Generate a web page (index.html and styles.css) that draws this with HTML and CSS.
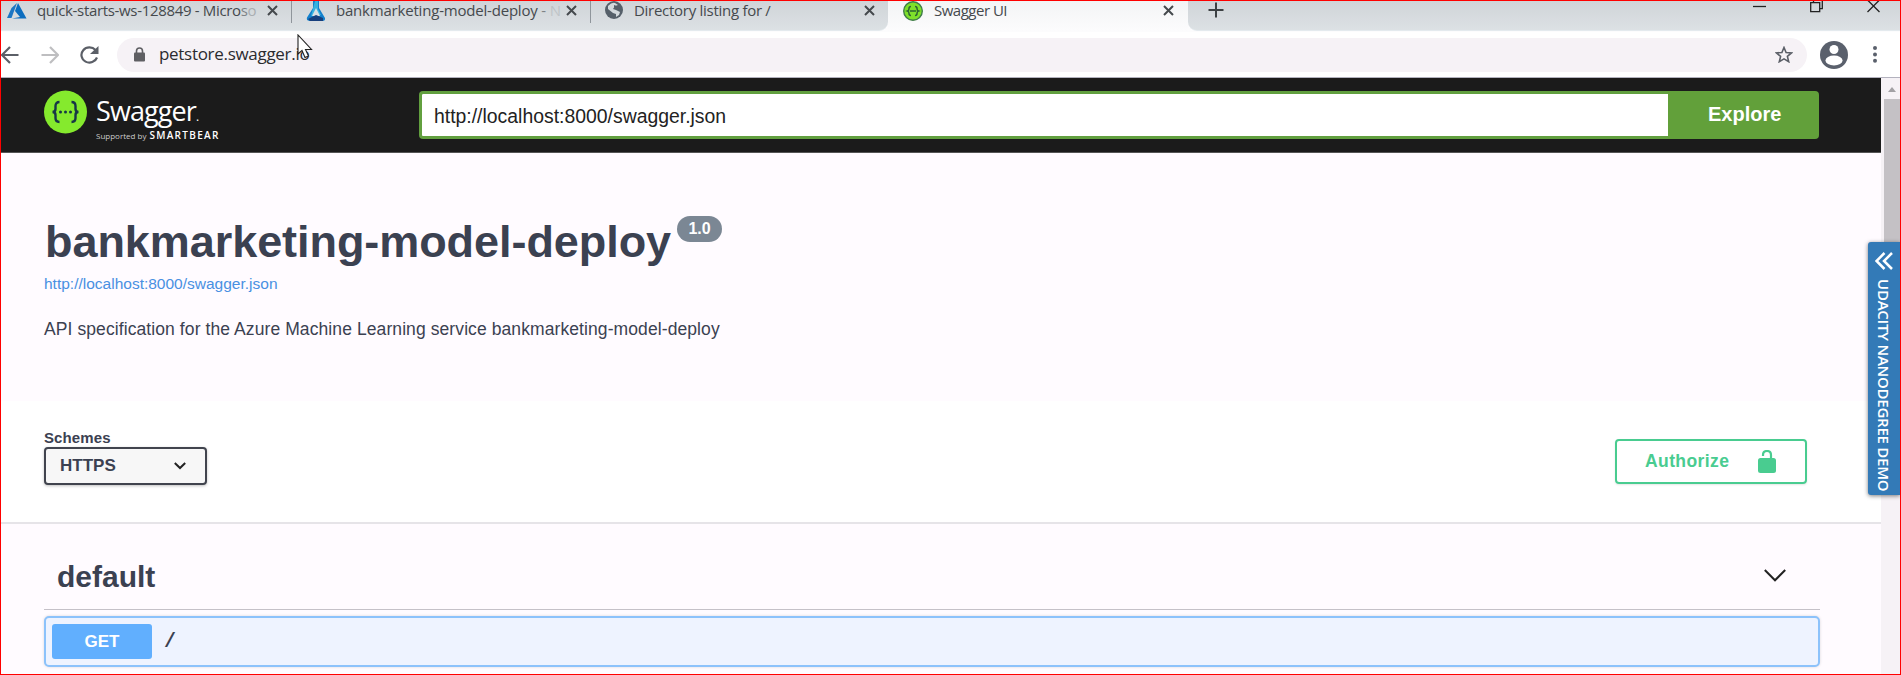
FILE: index.html
```html
<!DOCTYPE html>
<html lang="en">
<head>
<meta charset="utf-8">
<title>Swagger UI</title>
<link rel="stylesheet" href="styles.css">
</head>
<body>
<div class="frame">
  <div class="tabstrip">
    <div class="tab tab-first">
      <svg class="fav azure" width="20" height="16" viewBox="0 0 20 16"><path d="M10 0 4.500 5 0 15h4.500z" fill="#1b76c4"/><path d="M11 0 8 8l5 6-8 1.500h14.500z" fill="#0b6dbf"/></svg>
      <span class="tab-title t1">quick-starts-ws-128849 - Micro<i class="fade1">s</i><i class="fade2">o</i></span>
      <svg class="close" width="11" height="11" viewBox="0 0 11 11"><path d="M1 1l9 9M10 1l-9 9"/></svg>
    </div>
    <div class="tab tab-second">
      <svg class="fav" width="20" height="20" viewBox="0 0 20 20"><path d="M7 0h6v7l6 10q.5 3-2.500 3h-13q-3.500-.5-2.500-3.500L7 7z" fill="#1380cc"/><path d="M9 0h3v8l3 6H8l-3 1z" fill="#36b2df"/><path d="M10 7l4 8H6z" fill="#d9dfe4"/><path d="M2 18l8-4 7 3v3H4z" fill="#173f7d"/></svg>
      <span class="tab-title t2">bankmarketing-model-deploy <i class="fade1">-</i> <i class="fade3">N</i></span>
      <svg class="close" width="11" height="11" viewBox="0 0 11 11"><path d="M1 1l9 9M10 1l-9 9"/></svg>
    </div>
    <div class="tab tab-third">
      <svg class="fav" width="18" height="18" viewBox="0 0 18 18"><circle cx="9" cy="9" r="9" fill="#56606a"/><path d="M3 5q4-4 7-3l3 2-3 1-2 3 3 1 4 2-1 3-3 2v-3l-3-1-5-4z" fill="#d3d9dd"/><path d="M9 4l5 2 2 3-3-1-4-2z" fill="#56606a"/></svg>
      <span class="tab-title t3">Directory listing for /</span>
      <svg class="close" width="11" height="11" viewBox="0 0 11 11"><path d="M1 1l9 9M10 1l-9 9"/></svg>
    </div>
    <div class="tab tab-active">
      <svg class="fav" width="20" height="20" viewBox="0 0 20 20"><circle cx="10" cy="10" r="9.300" fill="#7ee02b" stroke="#3f7c49" stroke-width="1.400"/><path d="M8 5.500q-2 0-2 2t-1.500 2.500Q6 10.500 6 12.500t2 2M12 5.500q2 0 2 2t1.500 2.500Q14 10.500 14 12.500t-2 2M7 10h6" fill="none" stroke="#2c6333" stroke-width="1.500"/></svg>
      <span class="tab-title t4">Swagger UI</span>
      <svg class="close" width="11" height="11" viewBox="0 0 11 11"><path d="M1 1l9 9M10 1l-9 9"/></svg>
    </div>
    <div class="tab-rest">
      <svg class="plus" width="16" height="16" viewBox="0 0 16 16"><path d="M8 .5v15M.5 8h15"/></svg>
      <div class="window-buttons">
        <svg width="13" height="14" viewBox="0 0 13 14"><path d="M0 7.500h13"/></svg>
        <svg width="13" height="14" viewBox="0 0 13 14"><path d="M.7 3.700h9v9h-9zM3.500 3.500V.7h8.800v9H10"/></svg>
        <svg width="13" height="14" viewBox="0 0 13 14"><path d="M.5 1l12 12M12.500 1l-12 12"/></svg>
      </div>
    </div>
  </div>

  <div class="toolbar">
    <svg class="back" width="18" height="18" viewBox="0 0 18 18"><path d="M17.500 9H1.500M9 1 1 9l8 8"/></svg>
    <svg class="forward" width="18" height="18" viewBox="0 0 18 18"><path d="M.5 9h16M9 1l8 8-8 8"/></svg>
    <svg class="reload" width="19" height="18" viewBox="0 0 19 18"><path d="M15.500 4A8 7.600 0 1 0 17 11.500" /><path class="tip" d="M18.500 0v8H10z"/></svg>
    <div class="address">
      <svg width="11" height="15" viewBox="0 0 11 15"><path d="M2.500 6V4q0-3 3-3t3 3v2" fill="none" stroke="#5f5f63" stroke-width="1.600"/><rect y="5.500" width="11" height="9" rx="1" fill="#5f5f63"/></svg>
      <span class="url">petstore.swagger.io</span>
      <svg class="star" width="18" height="17" viewBox="0 0 18 17"><path d="M9 1.500l2.100 5 5.400.4-4.100 3.500 1.300 5.300L9 12.900l-4.700 2.800 1.300-5.300L1.500 6.900l5.400-.4z"/></svg>
    </div>
    <svg class="avatar" width="28" height="28" viewBox="0 0 28 28"><circle cx="14" cy="14" r="14" fill="#5a606c"/><circle cx="14" cy="8.500" r="4.500" fill="#fff"/><ellipse cx="14" cy="19.500" rx="8.500" ry="5" fill="#fff"/></svg>
    <svg class="kebab" width="4" height="17" viewBox="0 0 4 17"><circle cx="2" cy="2" r="2"/><circle cx="2" cy="8.500" r="2"/><circle cx="2" cy="14.700" r="2"/></svg>
  </div>

  <div class="viewport">
    <div class="page">
      <header class="topbar">
        <svg class="logo-mark" width="43" height="44" viewBox="0 0 43 44"><circle cx="21.500" cy="22" r="21.500" fill="#85ea2d"/><g fill="none" stroke="#173647" stroke-width="2.400"><path d="M15.500 12q-4 0-4 4v3q0 3-3 3 3 0 3 3v3q0 4 4 4M27.500 12q4 0 4 4v3q0 3 3 3-3 0-3 3v3q0 4-4 4"/></g><g fill="#173647"><circle cx="16.500" cy="22" r="1.500"/><circle cx="21.500" cy="22" r="1.500"/><circle cx="26.500" cy="22" r="1.500"/></g></svg>
        <div class="logo-text">
          <div class="brand">Swagger<small>.</small></div>
          <div class="support"><span>Supported by</span><b>SMARTBEAR</b></div>
        </div>
        <div class="url-form">
          <div class="url-input"><span>http://localhost:8000/swagger.json</span></div>
          <div class="explore"><span>Explore</span></div>
        </div>
      </header>

      <section class="info">
        <div class="title-row"><h1>bankmarketing-model-deploy</h1><span class="version"><span>1.0</span></span></div>
        <a class="spec-link">http://localhost:8000/swagger.json</a>
        <p class="description">API specification for the Azure Machine Learning service bankmarketing-model-deploy</p>
      </section>

      <section class="schemes">
        <div>
          <div class="schemes-label">Schemes</div>
          <div class="select"><span>HTTPS</span><svg width="12" height="8" viewBox="0 0 12 8"><path d="M.8 1l5.200 5 5.200-5"/></svg></div>
        </div>
        <div class="authorize"><span>Authorize</span><svg width="18" height="23" viewBox="0 0 18 23"><path d="M5 6V5q0-4 4-4t4 4v5" fill="none" stroke="#49cc90" stroke-width="2.200"/><rect y="8" width="18" height="15" rx="2.500" fill="#49cc90"/></svg></div>
      </section>

      <section class="operations">
        <div class="tag"><h2>default</h2><svg width="22" height="13" viewBox="0 0 22 13"><path d="M.8 1 11 11.300 21.200 1"/></svg></div>
        <div class="opblock"><div class="method"><span>GET</span></div><span class="path">/</span></div>
      </section>
    </div>
    <div class="scrollbar"><div class="arrow"></div><div class="thumb"></div></div>
  </div>

  <svg class="cursor" width="17" height="28" viewBox="0 0 17 28"><path d="M1 1v19l4-3.500L8 23.500l3.500-1.500-3-6.500H14.500z" fill="#fff" stroke="#222" stroke-width="1.100"/></svg>
  <div class="ribbon">
    <svg width="18" height="18" viewBox="0 0 18 18"><path d="M9.500 1 1.500 9l8 8M17 1 9 9l8 8"/></svg>
    <span>UDACITY NANODEGREE DEMO</span>
  </div>
</div>
</body>
</html>
```
FILE: styles.css
```css
* { box-sizing: border-box; }
body { margin: 0; font-family: "Liberation Sans", Arial, sans-serif; color: #3b4151; }
svg { display: block; flex: none; }
span, h1, h2, a, p { white-space: nowrap; }
.frame { position: relative; width: 1901px; height: 675px; border: 1px solid #f00; overflow: hidden; display: flex; flex-direction: column; background: #fffbff; }

.tabstrip { display: flex; height: 31px; flex: none; background: #fcfcfd; }
.tab { display: flex; align-items: flex-start; height: 30px; background: linear-gradient(#d0d4d8, #dce1e4); border-bottom: 1px solid #e4eaee; }
.tab-first { width: 291px; padding-left: 6px; }
.tab-second { width: 299px; padding-left: 14px; }
.tab-first::after, .tab-second::after { content: ""; width: 1px; height: 22px; background: #8f959b; margin-left: auto; }
.tab-third { width: 297px; padding-left: 14px; border-radius: 0 0 9px 0; }
.tab-active { width: 300px; padding-left: 15px; background: linear-gradient(#f3f4f5, #fcfcfd); border: 0; }
.azure { margin-top: 2px; }
.tab-title { font-family: "Open Sans", "Noto Sans", sans-serif; font-size: 15px; line-height: 20px; margin-top: -1px; color: #45494d; }
.tab-title i { font-style: normal; }
.fade1 { opacity: .6; }
.fade2 { opacity: .3; }
.fade3 { opacity: .15; }
.t1 { margin-left: 10px; width: 220px; letter-spacing: -.33px; }
.t2 { margin-left: 10px; width: 220px; letter-spacing: -.2px; }
.t3 { margin-left: 11px; width: 220px; letter-spacing: -.28px; }
.t4 { margin-left: 11px; width: 220px; letter-spacing: -.5px; }
.close { margin: 4px 0 0 10px; }
.close path { fill: none; stroke: #45494d; stroke-width: 2; }
.tab-active .close { margin-left: 9px; }
.tab-rest { flex: 1; display: flex; justify-content: space-between; height: 30px; padding: 0 20px; background: linear-gradient(#d0d4d8, #dce1e4); border-bottom: 1px solid #e4eaee; border-radius: 0 0 0 9px; }
.plus { margin-top: 1px; }
.plus path { stroke: #3c4043; stroke-width: 2; }
.window-buttons { display: flex; gap: 44px; margin-top: -2px; }
.window-buttons path { fill: none; stroke: #222; stroke-width: 1.3; }

.toolbar { display: flex; align-items: center; height: 46px; flex: none; background: #fff; border-bottom: 1px solid #b3b2be; }
.back path, .forward path, .reload path { fill: none; stroke: #5b5f67; stroke-width: 2.2; }
.forward { margin-left: 22px; }
.forward path { stroke: #bebec0; }
.reload { margin-left: 21px; }
.reload .tip { fill: #5b5f67; stroke: none; }
.address { display: flex; align-items: center; width: 1690px; height: 34px; margin-left: 18px; border-radius: 17px; background: #f6f2f6; padding: 0 14px 0 17px; }
.url { font: 17px/22px "Open Sans", "Noto Sans", sans-serif; letter-spacing: -.3px; color: #2b2b2f; margin: -1px 0 0 14px; }
.star { margin-left: auto; }
.star path { fill: none; stroke: #5b5f67; stroke-width: 1.6; }
.avatar { margin-left: 13px; }
.kebab { margin-left: 25px; fill: #5a606c; }

.viewport { display: flex; flex: 1; min-height: 0; }
.page { width: 1880px; }
.topbar { display: flex; height: 75px; background: #1b1b1b; padding-left: 43px; border-bottom: 1px solid #555; }
.logo-mark { margin-top: 12px; }
.logo-text { width: 332px; padding-left: 9px; color: #fff; font-family: "Open Sans", sans-serif; }
.brand { height: 51px; padding-top: 15px; font-size: 27px; line-height: 36px; letter-spacing: -.9px; }
.brand small { font-size: 12px; }
.support { display: flex; align-items: baseline; line-height: 12px; gap: 3px; }
.support span { font-size: 8px; color: #ccc; }
.support b { font-size: 10px; font-weight: 600; letter-spacing: 1.3px; }
.url-form { display: flex; width: 1400px; height: 48px; margin-top: 13px; }
.url-input { width: 1249px; border: 3px solid #62a03f; border-right: 0; border-radius: 4px 0 0 4px; background: #fff; padding-left: 12px; font-size: 19.4px; line-height: 44px; color: #222; }
.explore { flex: 1; border-radius: 0 4px 4px 0; background: #62a03a; color: #fff; font-weight: bold; font-size: 20px; line-height: 47px; padding-left: 40px; }

.info { height: 248px; padding: 59px 0 0 43px; }
.title-row { display: flex; align-items: flex-start; }
h1 { margin: 0 0 0 1px; font-size: 45px; line-height: 60px; letter-spacing: -.06px; }
.version { width: 45px; height: 26px; margin: 4px 0 0 6px; border-radius: 13px; background: #7b8794; color: #fff; font-size: 16px; font-weight: bold; line-height: 26px; text-align: center; }
.spec-link { display: block; font-size: 15.5px; line-height: 20px; margin-top: 2px; color: #4990e2; }
.description { margin: 24px 0 0; font-size: 17.5px; line-height: 22px; letter-spacing: .09px; }

.schemes { display: flex; justify-content: space-between; height: 123px; padding: 27px 74px 0 43px; background: #fff; border-bottom: 2px solid #e6e4e8; }
.schemes-label { font-size: 15px; font-weight: bold; line-height: 19px; letter-spacing: .1px; }
.select { display: flex; align-items: center; justify-content: space-between; width: 163px; height: 38px; border: 2px solid #41444e; border-radius: 4px; background: #f7f7f7; box-shadow: 0 1px 3px rgba(0,0,0,.25); padding: 0 19px 0 14px; font-size: 17px; font-weight: bold; }
.select path, .tag path { fill: none; stroke: #222; stroke-width: 2; }
.authorize { display: flex; align-items: center; justify-content: space-between; width: 192px; height: 45px; margin-top: 11px; border: 2px solid #49cc90; border-radius: 4px; box-shadow: 0 1px 2px rgba(0,0,0,.1); color: #49cc90; font-size: 17.5px; letter-spacing: .4px; font-weight: bold; padding: 0 29px 0 28px; }

.operations { padding: 0 61px 0 43px; }
.tag { display: flex; align-items: center; justify-content: space-between; height: 86px; border-bottom: 1px solid #c5c1c8; padding: 20px 34px 0 13px; }
.tag svg { margin-top: -2px; }
h2 { margin: 0; font-size: 30px; line-height: 36px; }
.opblock { display: flex; align-items: center; height: 51px; margin-top: 6px; border: 2px solid #8cc2fb; border-radius: 5px; background: #eef3ff; padding-left: 6px; box-shadow: 0 0 3px rgba(0,0,0,.15); }
.method { width: 100px; height: 35px; border-radius: 3px; background: #61affe; color: #fff; font-size: 17px; font-weight: bold; line-height: 36px; text-align: center; }
.path { margin-left: 12px; font: bold 20px "Liberation Mono", monospace; }

.scrollbar { display: flex; flex-direction: column; align-items: center; width: 19px; background: #f6f2f6; padding-left: 2px; }
.arrow { width: 0; height: 0; margin-top: 9px; border: 4px solid transparent; border-top: 0; border-bottom: 5px solid #a3a1a5; }
.thumb { width: 16px; height: 170px; margin-top: 7px; background: #c4c1c5; }

.cursor { position: absolute; left: 296px; top: 33px; }
.ribbon { position: absolute; left: 1867px; top: 241px; width: 32px; height: 253px; display: flex; flex-direction: column; align-items: center; padding-top: 10px; gap: 9px; border-radius: 3px 0 0 3px; background: #337ab7; box-shadow: 0 1px 4px rgba(0,0,0,.5); color: #fff; }
.ribbon path { fill: none; stroke: #fff; stroke-width: 2.5; }
.ribbon span { writing-mode: vertical-rl; font: 600 15px/20px "Open Sans", sans-serif; letter-spacing: -.25px; }
```
